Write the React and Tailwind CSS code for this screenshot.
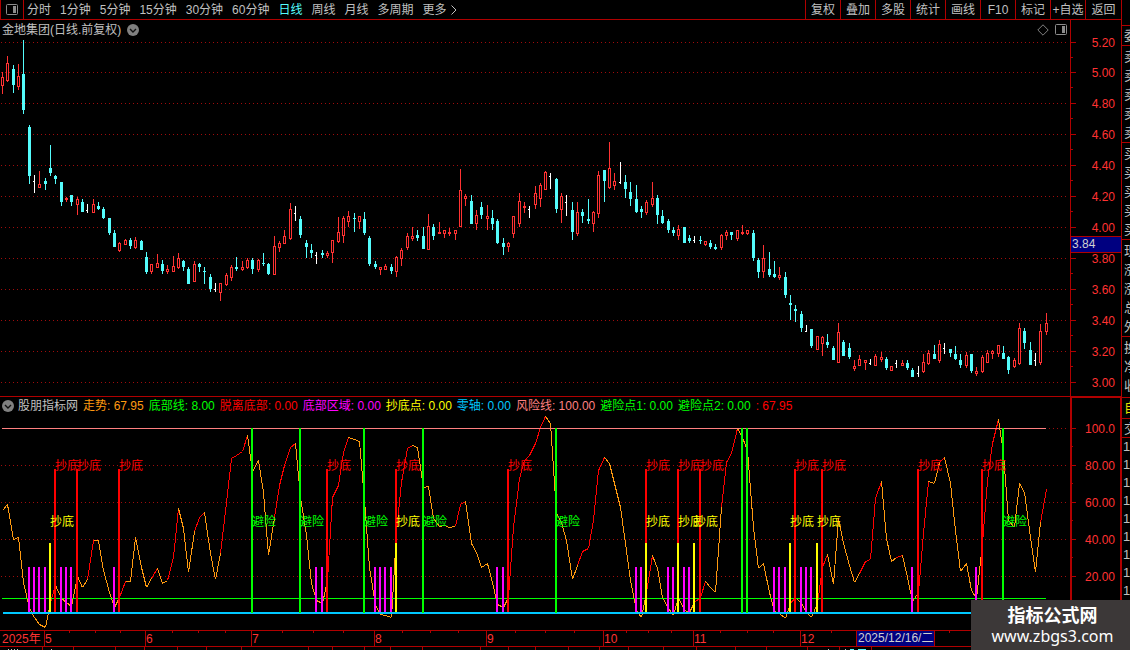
import React, { useState } from 'react'

const periods = ["分时", "1分钟", "5分钟", "15分钟", "30分钟", "60分钟", "日线", "周线", "月线", "多周期"]
const tools = ["复权", "叠加", "多股", "统计", "画线", "F10", "标记", "+自选"]

const legend = [
  { text: "走势: 67.95", color: "text-[#ff9a10]" },
  { text: "底部线: 8.00", color: "text-[#00ff00]" },
  { text: "脱离底部: 0.00", color: "text-[#ff0000]" },
  { text: "底部区域: 0.00", color: "text-[#ff00ff]" },
  { text: "抄底点: 0.00", color: "text-[#ffff00]" },
  { text: "零轴: 0.00", color: "text-[#00c8ff]" },
  { text: "风险线: 100.00", color: "text-[#ff8080]" },
  { text: "避险点1: 0.00", color: "text-[#00ff00]" },
  { text: "避险点2: 0.00", color: "text-[#00ff00]" },
  { text: ": 67.95", color: "text-[#ff0000]" },
]

// type, high, body top, body bottom, low   (w = doji: high, close tick, tick, low)
const candles = [
  ['r',72,77,86,94],['r',56,63,81,82],['c',65,69,85,93],['r',64,76,87,90],['c',40,74,110,114],
  ['c',125,127,176,184],['w',175,181,181,193],['r',171,184,188,188],['c',178,181,184,190],['c',145,168,173,176],
  ['c',175,176,179,184],['c',182,182,202,206],['r',197,198,200,202],['c',195,195,202,206],['r',197,199,205,215],
  ['c',199,202,212,212],['w',204,210,210,213],['r',199,204,213,213],['c',202,206,209,210],['c',207,209,218,219],
  ['c',218,218,233,235],['c',230,233,247,247],['r',242,243,251,252],['r',239,240,245,245],['c',238,240,246,249],
  ['r',237,240,248,249],['c',240,241,250,250],['c',252,257,272,274],['r',264,264,272,274],['r',254,263,268,268],
  ['c',260,264,271,274],['r',265,269,272,274],['r',256,266,272,272],['r',253,258,268,269],['c',260,261,267,271],
  ['c',267,269,284,284],['r',261,264,282,282],['c',263,264,267,272],['c',267,271,272,284],['c',274,277,289,292],
  ['w',283,289,289,292],['r',283,283,293,301],['r',273,275,285,286],['r',265,267,278,281],['c',257,267,269,271],
  ['r',261,267,270,271],['r',258,260,268,269],['c',258,260,269,274],['r',259,260,270,272],['c',253,263,264,266],
  ['c',263,264,274,275],['r',236,246,275,275],['r',241,243,248,252],['r',230,236,244,244],['r',203,209,239,240],
  ['w',206,213,213,221],['c',216,219,235,238],['c',240,243,247,258],['c',244,250,253,258],['w',252,255,255,264],
  ['c',250,253,255,258],['r',251,253,256,258],['r',240,240,253,263],['r',217,232,242,243],['r',216,218,236,243],
  ['r',211,216,222,227],['c',213,218,219,232],['r',216,216,222,229],['c',212,219,233,235],['c',236,238,264,266],
  ['c',261,264,267,269],['r',267,267,270,275],['r',264,266,270,270],['c',264,267,271,274],['r',256,257,272,277],
  ['r',248,250,259,266],['r',233,236,248,250],['r',227,236,239,241],['c',230,235,238,241],['c',227,236,249,249],
  ['r',214,226,250,250],['c',224,227,236,240],['r',222,232,234,234],['r',230,230,234,238],['r',228,232,234,236],
  ['r',230,230,234,240],['r',169,190,227,227],['r',194,196,199,206],['c',195,201,224,224],['r',210,215,224,230],
  ['c',202,207,215,219],['r',205,216,219,230],['c',210,218,224,230],['c',219,221,243,244],['c',238,243,247,255],
  ['r',242,243,247,252],['r',216,216,234,238],['r',193,201,224,227],['r',202,206,208,213],['w',206,209,209,218],
  ['r',186,193,205,209],['r',183,185,199,207],['r',171,172,190,190],['w',173,176,176,189],['c',178,179,209,213],
  ['r',193,196,210,223],['w',195,202,202,216],['c',202,210,232,240],['r',202,212,234,236],['c',209,212,216,223],
  ['c',199,219,221,224],['r',211,212,224,232],['r',171,175,214,218],['c',170,170,181,202],['r',142,168,188,189],
  ['r',173,181,186,190],['w',162,182,182,184],['c',175,182,189,198],['c',182,192,199,206],['c',185,199,212,213],
  ['c',206,209,212,218],['r',200,202,213,215],['r',182,198,205,207],['c',195,198,215,224],['c',210,216,223,224],
  ['c',219,221,230,233],['c',227,230,233,236],['r',225,229,236,240],['c',227,227,243,243],['c',235,238,241,243],
  ['w',236,240,240,243],['c',236,240,241,244],['r',241,241,245,246],['c',240,243,247,249],['c',244,247,249,250],
  ['r',234,235,248,250],['r',230,232,236,240],['c',232,232,235,240],['r',230,230,239,241],['r',225,232,234,235],
  ['r',230,230,234,235],['c',230,233,258,261],['c',258,260,272,278],['r',245,258,272,278],['c',252,269,275,277],
  ['c',261,274,277,278],['r',267,275,278,280],['c',272,277,295,298],['c',295,303,305,320],['c',305,309,311,322],
  ['c',311,314,328,332],['w',325,331,331,332],['c',329,329,346,348],['r',336,336,350,350],['r',336,337,344,356],
  ['c',334,342,345,348],['c',346,348,360,360],['r',323,332,363,363],['c',340,342,356,356],['c',343,348,357,359],
  ['r',360,366,369,371],['r',355,359,366,366],['r',360,360,363,370],['w',359,363,363,365],['r',354,356,366,366],
  ['r',352,357,360,362],['c',357,359,368,370],['r',366,366,371,371],['w',360,363,363,368],['r',360,363,366,366],
  ['c',360,363,368,370],['c',368,370,377,377],['w',366,373,373,377],['r',354,362,372,373],['r',350,353,364,365],
  ['c',345,354,359,359],['r',340,344,361,363],['w',343,348,348,354],['c',349,349,353,357],['c',346,354,359,360],
  ['c',354,360,365,368],['r',352,355,366,368],['c',354,354,371,373],['r',367,371,374,376],['r',355,357,372,373],
  ['r',350,353,363,363],['r',350,351,354,359],['r',345,345,354,357],['c',346,353,359,359],['c',356,357,370,374],
  ['r',358,360,367,368],['r',323,328,364,365],['c',328,331,343,349],['c',342,350,365,365],['w',353,360,360,366],
  ['r',324,331,363,365],['r',313,323,332,335],
]

const trend = [
  510,504,539,537,582,608,617,624,627,602,585,598,602,606,576,587,579,540,540,570,
  592,607,597,581,581,537,567,587,578,568,583,580,557,508,528,572,531,517,512,553,
  579,553,502,458,455,451,435,471,460,492,555,517,485,465,447,443,497,535,583,600,
  603,580,497,485,452,437,439,441,500,567,605,614,615,617,532,482,448,445,447,487,
  486,518,526,525,527,526,504,501,543,552,567,563,582,604,607,597,527,478,460,455,
  443,427,416,423,513,522,540,579,565,551,548,520,470,457,463,483,507,543,580,610,
  617,592,555,568,597,608,615,597,610,612,602,597,581,587,592,507,462,453,428,437,
  450,527,568,563,592,611,613,618,603,597,603,612,617,603,567,554,584,518,543,565,
  582,573,561,559,498,481,538,561,557,555,577,601,592,533,481,483,462,457,483,530,
  571,563,590,598,543,480,443,419,453,520,527,483,492,537,572,522,489,
]

const bottomZone = [5,6,7,8,11,12,13,21,59,60,70,71,72,73,93,94,119,120,125,126,128,129,145,146,147,150,151,152,171,183]
const leaveBottom = [10,14,22,61,74,95,121,127,131,149,154,172,184]
const buyPoints = [9,74,121,127,130,148,153]
const riskPoints = [47,56,68,79,104,139,140,188]

const priceLabels = [
  ["5.20",42],["5.00",72],["4.80",103],["4.60",134],["4.40",165],["4.20",196],
  ["4.00",227],["3.80",258],["3.60",289],["3.40",320],["3.20",351],["3.00",382],
]
const levelLabels = [["100.0",428],["80.00",465],["60.00",502],["40.00",539],["20.00",576]]
const months = [["5",44],["6",145],["7",251],["8",374],["9",486],["10",603],["11",693],["12",800]]
const weekTicks = [69,95,120,172,198,225,282,313,343,402,430,458,515,545,574,626,648,671,720,747,773,831,949]
const footTicks = [42,73,115,144,177,206,241,308,332,364,390,422,480,508,535,568,599,628,663,696,735,766,807,839,871]

const colors = { r: "#ff3232", c: "#54fcfc", w: "#ffffff" }

const xAt = (i) => Math.floor(2.662 + i * 5.3234)

function PanelIcon() {
  return (
    <svg width="12" height="11" viewBox="0 0 12 11" className="block">
      <rect x="0.5" y="0.5" width="11" height="10" rx="1" fill="none" stroke="#8c8c8c" />
      <rect x="7" y="2" width="3" height="7" fill="#8c8c8c" />
    </svg>
  )
}

function CircleIcon() {
  return (
    <svg width="12" height="12" viewBox="0 0 12 12" className="block">
      <circle cx="6" cy="6" r="6" fill="#808080" />
      <path d="M3 5 L6 8 L9 5" fill="none" stroke="#101010" strokeWidth="1.4" />
    </svg>
  )
}

function Candle({ data, x }) {
  const [type, high, top, bottom, low] = data
  const color = colors[type]
  if (type === 'w') {
    return (
      <g fill={color}>
        <rect x={x} y={high} width="1" height={low - high} />
        <rect x={x - 1} y={top} width="1" height="1" />
      </g>
    )
  }
  return (
    <g fill={color}>
      <rect x={x} y={high} width="1" height={low - high} />
      <rect x={x - 1} y={top} width="3" height={bottom - top} />
      {type === 'r' && bottom - top > 2 && (
        <rect x={x} y={top + 1} width="1" height={bottom - top - 2} fill="#000000" />
      )}
    </g>
  )
}

function GridLine({ y, from = 1 }) {
  return <line x1={from} y1={y + 0.5} x2="1068" y2={y + 0.5} stroke="#a00c0c" strokeDasharray="1 3" />
}

function AxisLabels({ labels }) {
  return labels.map(([text, y]) => (
    <g key={text}>
      <rect x="1071" y={y} width="5" height="1" fill="#b00000" />
      <text x="1115" y={y + 5} textAnchor="end" fill="#ff3232">{text}</text>
    </g>
  ))
}

function PriceChart() {
  return (
    <svg viewBox="0 40 1121 356" className="block w-full overflow-visible text-[12px]" shapeRendering="crispEdges">
      {priceLabels.map(([text, y]) => <GridLine key={text} y={y} />)}
      {candles.map((c, i) => <Candle key={i} data={c} x={xAt(i)} />)}
      <rect x="1070" y="40" width="1" height="356" fill="#b00000" />
      {priceLabels.slice(0, -1).map(([text, y]) => (
        <rect key={text} x="1071" y={y + 15} width="2" height="1" fill="#b00000" />
      ))}
      <AxisLabels labels={priceLabels} />
      <rect x="1070" y="236" width="51" height="17" fill="#b00000" />
      <rect x="1071" y="237" width="50" height="15" fill="#000080" />
      <text x="1072" y="248" fill="#d0d0d0">3.84</text>
    </svg>
  )
}

function TrendLine() {
  return trend.slice(1).map((y, i) => {
    const rising = y < trend[i]
    const wasRising = i > 0 && trend[i] < trend[i - 1]
    return (
      <line
        key={i}
        x1={xAt(i) + 0.5}
        y1={trend[i] + 0.5}
        x2={xAt(i + 1) + 0.5}
        y2={y + 0.5}
        stroke={rising && wasRising ? "#ff0000" : "#ff9a10"}
      />
    )
  })
}

function Bars({ list, top, bottom = 612, color }) {
  return list.map((i) => (
    <rect key={i} x={xAt(i) - 1} y={top} width="2" height={bottom - top} fill={color} />
  ))
}

function Marks({ list, y, text, color }) {
  return list.map((i) => <text key={i} x={xAt(i)} y={y} fill={color}>{text}</text>)
}

function IndicatorChart() {
  return (
    <svg viewBox="0 416 1121 234" className="block w-full overflow-visible text-[12px]" shapeRendering="crispEdges">
      {levelLabels.map(([text, y]) => <GridLine key={text} y={y} from={y === 428 ? 1049 : 1} />)}
      <TrendLine />
      <rect x="2" y="428" width="1044" height="1" fill="#ff8080" />
      <rect x="2" y="598" width="1044" height="1" fill="#00ff00" />
      <Bars list={bottomZone} top={567} color="#ff00ff" />
      <Bars list={leaveBottom} top={469} color="#ff0000" />
      <Bars list={buyPoints} top={543} color="#ffff00" />
      <rect x="3" y="612" width="1043" height="2" fill="#00c8ff" />
      <Bars list={riskPoints} top={428} bottom={613} color="#00ff00" />
      <Marks list={leaveBottom} y={470} text="抄底" color="#ff0000" />
      <Marks list={buyPoints} y={526} text="抄底" color="#ffff00" />
      <Marks list={riskPoints.filter((i) => i !== 139 && i !== 140)} y={526} text="避险" color="#00ff00" />

      <rect x="1070" y="416" width="2" height="214" fill="#b00000" />
      <rect x="1120" y="416" width="1" height="214" fill="#b00000" />
      {levelLabels.slice(0, -1).map(([text, y]) => (
        <rect key={text} x="1072" y={y + 18} width="1" height="1" fill="#b00000" />
      ))}
      <AxisLabels labels={levelLabels} />

      {/* time axis */}
      <g fill="#b00000">
        <rect x="0" y="630" width="1121" height="1" />
        <rect x="0" y="646" width="1121" height="1" />
        {weekTicks.map((x) => <rect key={x} x={x} y="631" width="1" height="2" />)}
        {footTicks.map((x) => <rect key={x} x={x} y="647" width="1" height="3" />)}
        {months.map(([text, x]) => <rect key={text} x={x} y="631" width="1" height="15" />)}
      </g>
      <text x="2" y="643" fill="#ff3232">2025年</text>
      {months.map(([text, x]) => <text key={text} x={x + 1} y="643" fill="#ff3232">{text}</text>)}
      <rect x="856" y="630" width="79" height="17" fill="#b00000" />
      <rect x="857" y="631" width="77" height="15" fill="#000080" />
      <text x="858" y="642" fill="#d0d0d0">2025/12/16/二</text>
      <path d="M8 649.5h12M51 649.5h1M828 649.5h1M845 649.5h3" stroke="#c0c0c0" strokeDasharray="1 2" />
      <path d="M850 649.5h4M858 649.5h8" stroke="#54fcfc" />
    </svg>
  )
}

function QuoteStrip() {
  return (
    <aside className="w-[9px] shrink-0 overflow-hidden whitespace-nowrap border-l border-[#b00000] text-[13px] leading-[19px] text-[#c0c0c0] [&>div]:border-b [&>div]:border-[#b00000] [&>div]:pl-0.5">
      <div className="h-[26px]"></div>
      <div className="h-5">委</div>
      <div className="h-[97px] pt-px">
        {["卖五", "卖四", "卖三", "卖二", "卖一"].map((t) => <p key={t}>{t}</p>)}
      </div>
      <div className="h-[97px] pt-px">
        {["买一", "买二", "买三", "买四", "买五"].map((t) => <p key={t}>{t}</p>)}
      </div>
      <div className="h-[97px] pt-px">
        {["现价", "涨跌", "涨幅", "总量", "外盘"].map((t) => <p key={t}>{t}</p>)}
      </div>
      <div className="h-[61px] pt-px">
        {["换手", "净资", "收益"].map((t) => <p key={t}>{t}</p>)}
      </div>
      <div className="h-[21px] text-[#e0e000]">自</div>
      <div className="h-[19px]">交</div>
      <ul className="pl-px leading-[18px]">
        {[1, 2, 3, 4, 5, 6, 7, 8, 9].map((n) => <li key={n}>1</li>)}
      </ul>
    </aside>
  )
}

function App() {
  const [period, setPeriod] = useState("日线")

  return (
    <div className="relative flex min-h-screen overflow-hidden bg-black text-[12px] text-[#c0c0c0] [font-family:'Liberation_Sans','Noto_Sans_CJK_SC',sans-serif]">
      <main className="min-w-0 flex-1">
        <nav className="flex h-5 items-stretch justify-between border-b border-[#b00000] whitespace-nowrap">
          <div className="flex items-center gap-[9px]">
            <button type="button" aria-label="侧栏" className="-mr-1.5 flex w-6 items-center justify-center self-stretch border-x border-[#b00000]">
              <PanelIcon />
            </button>
            {periods.map((p) => (
              <button
                key={p}
                type="button"
                onClick={() => setPeriod(p)}
                className={p === period ? "text-[#54fcfc]" : "hover:text-white"}
              >
                {p}
              </button>
            ))}
            <button type="button" className="flex items-center gap-1 hover:text-white">
              更多
              <svg width="6" height="10" viewBox="0 0 6 10">
                <path d="M0.5 0.5 L5 5 L0.5 9.5" fill="none" stroke="#c0c0c0" />
              </svg>
            </button>
          </div>
          <div className="flex">
            {tools.map((t) => (
              <button key={t} type="button" className="w-[35px] border-l border-[#b00000] hover:text-white">{t}</button>
            ))}
            <button type="button" className="w-9 border-l border-[#b00000] hover:text-white">返回</button>
          </div>
        </nav>

        <div className="flex h-5 items-stretch">
          <div className="flex flex-1 items-center gap-1.5 pb-px pl-0.5">
            <h1>金地集团(日线.前复权)</h1>
            <CircleIcon />
          </div>
          <div className="flex items-center gap-1.5 pb-px pr-[3px]">
            <svg width="12" height="12" viewBox="0 0 12 12">
              <path d="M6 0.8 L11.2 6 L6 11.2 L0.8 6 Z" fill="none" stroke="#808080" />
            </svg>
            <PanelIcon />
          </div>
          <div className="w-[51px] border-l border-[#b00000]"></div>
        </div>

        <PriceChart />

        <div className="flex h-5 items-stretch border-t border-[#b00000]">
          <div className="flex flex-1 items-center gap-[5px] whitespace-nowrap pb-0.5 pl-0.5">
            <div className="flex items-center gap-1">
              <CircleIcon />
              <h2>股朋指标网</h2>
            </div>
            {legend.map((item) => (
              <span key={item.text} className={item.color}>{item.text}</span>
            ))}
          </div>
          <div className="w-[51px] border-t border-l-2 border-r border-[#b00000]"></div>
        </div>

        <IndicatorChart />
      </main>

      <QuoteStrip />

      <div className="absolute right-0 bottom-0 flex h-[50px] w-[159px] flex-col items-center justify-center bg-[#3c3838] pl-1 text-white [font-family:'Noto_Sans','Noto_Sans_CJK_SC',sans-serif]">
        <p className="text-[18px] leading-[22px] font-bold">指标公式网</p>
        <p className="text-[16px] leading-5">www.zbgs3.com</p>
      </div>
    </div>
  )
}

export default App
